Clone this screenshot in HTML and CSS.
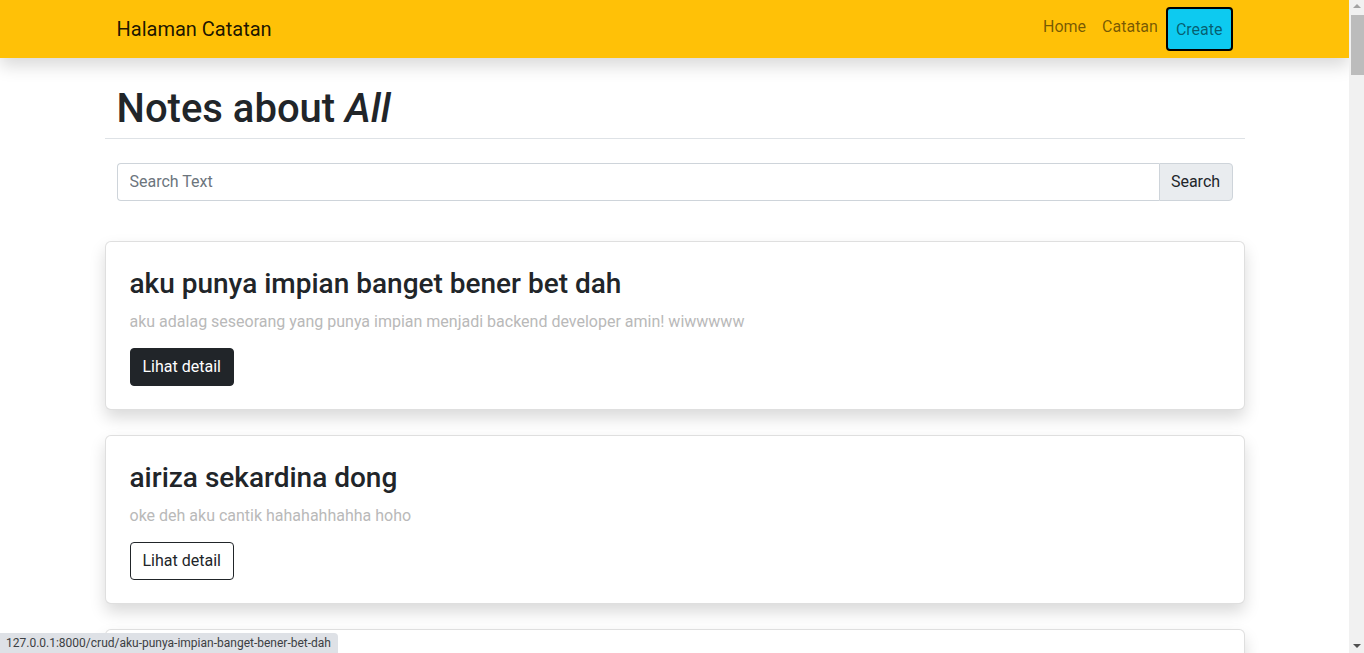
FILE: index.html
```html
<!DOCTYPE html>
<html lang="id">
<head>
<meta charset="utf-8">
<title>Halaman Catatan</title>
<link rel="stylesheet" href="styles.css">
</head>
<body>
<div class="page">
  <nav class="navbar">
    <div class="container nav-inner">
      <a class="brand" href="#">Halaman Catatan</a>
      <div class="nav-links">
        <a class="nav-link" href="#">Home</a>
        <a class="nav-link" href="#">Catatan</a>
        <a class="nav-link create" href="#">Create</a>
      </div>
    </div>
  </nav>
  <main class="container">
    <div class="page-head">
      <h1>Notes about <em>All</em></h1>
    </div>
    <form class="search">
      <input class="search-input" type="text" placeholder="Search Text">
      <button class="search-btn" type="button">Search</button>
    </form>
    <div class="cards">
      <div class="card">
        <h3 class="card-title">aku punya impian banget bener bet dah</h3>
        <p class="card-text">aku adalag seseorang yang punya impian menjadi backend developer amin! wiwwwww</p>
        <a class="btn btn-dark" href="#">Lihat detail</a>
      </div>
      <div class="card">
        <h3 class="card-title">airiza sekardina dong</h3>
        <p class="card-text">oke deh aku cantik hahahahhahha hoho</p>
        <a class="btn btn-outline" href="#">Lihat detail</a>
      </div>
      <div class="card card-empty"></div>
    </div>
  </main>
</div>
<div class="scrollbar">
  <span class="arrow arrow-up"></span>
  <span class="thumb"></span>
  <span class="arrow arrow-down"></span>
</div>
<div class="status">127.0.0.1:8000/crud/aku-punya-impian-banget-bener-bet-dah</div>
</body>
</html>
```
FILE: styles.css
```css
* { box-sizing: border-box; }
html, body { height: 100%; overflow: hidden; }
body {
  margin: 0;
  font-family: Roboto, "Noto Sans", sans-serif;
  font-size: 16px;
  line-height: 1.5;
  color: #212529;
  background: #fff;
}
a { text-decoration: none; }
.page {
  margin-right: 15px;
  height: 100%;
  overflow: hidden;
}
.container {
  width: 1140px;
  margin: 0 auto;
  padding: 0 12px;
}
.navbar {
  background: #ffc107;
  height: 58px;
  box-shadow: 0 8px 16px rgba(0,0,0,.15);
  position: relative;
  z-index: 2;
}
.nav-inner {
  display: flex;
  align-items: center;
  justify-content: space-between;
  height: 100%;
}
.brand {
  color: rgba(0,0,0,.9);
  font-size: 20px;
  line-height: 30px;
}
.nav-links {
  display: flex;
  align-items: center;
}
.nav-link {
  color: rgba(0,0,0,.55);
  padding: 8px;
  line-height: 24px;
  margin-top: -4px;
}
.nav-link.create {
  background: #0dcaf0;
  border: 2px solid #000;
  border-radius: 4px;
  margin-top: 0;
  padding: 9px 8px 7px;
}
.page-head {
  margin: 0 -12px;
  padding: 27px 12px 5px;
  border-bottom: 1px solid #dee2e6;
}
h1 {
  margin: 0;
  font-size: 40px;
  font-weight: 500;
  line-height: 48px;
}
h1 em { font-style: italic; }
.search {
  display: flex;
  margin-top: 24px;
  height: 38px;
}
.search-input {
  flex: 1;
  border: 1px solid #ced4da;
  border-right: 0;
  border-radius: 4px 0 0 4px;
  padding: 6px 12px;
  font: inherit;
  color: #212529;
}
.search-input::placeholder { color: #6c757d; }
.search-btn {
  width: 74px;
  background: #e9ecef;
  border: 1px solid #ced4da;
  border-radius: 0 4px 4px 0;
  font: inherit;
  color: #212529;
  padding: 0;
}
.cards {
  margin: 40px -12px 0;
  display: flex;
  flex-direction: column;
  gap: 25px;
}
.card {
  border: 1px solid rgba(0,0,0,.125);
  border-radius: 6px;
  padding: 24px 24px 23px;
  background: #fff;
  box-shadow: 0 8px 16px rgba(0,0,0,.15);
}
.card-empty { height: 168px; flex: none; }
.card-title {
  margin: 0 0 8px;
  font-size: 28px;
  font-weight: 500;
  line-height: 36px;
}
.card-text {
  margin: 0 0 14px;
  color: #b9b9b9;
}
.btn {
  display: inline-block;
  padding: 6px 12px;
  border-radius: 4px;
  line-height: 24px;
  border: 1px solid #212529;
}
.btn-dark { background: #212529; color: #fff; }
.btn-outline { background: #fff; color: #212529; }
.scrollbar {
  position: fixed;
  top: 0;
  right: 0;
  bottom: 0;
  width: 15px;
  background: #f1f1f1;
}
.thumb {
  position: absolute;
  top: 15px;
  left: 2px;
  right: 0;
  height: 60px;
  background: #bcbcbc;
}
.arrow {
  position: absolute;
  left: 4px;
  width: 0;
  height: 0;
  border-left: 4px solid transparent;
  border-right: 4px solid transparent;
}
.arrow-up { top: 4px; border-bottom: 4px solid #a3a3a3; }
.arrow-down { bottom: 5px; border-top: 4px solid #505050; }
.status {
  position: fixed;
  left: 0;
  bottom: 0;
  background: #dee1e6;
  color: #3c4043;
  font-size: 12px;
  line-height: 20px;
  padding: 0 7px 0 6px;
  border-top-right-radius: 4px;
  font-family: Roboto, sans-serif;
}
```
